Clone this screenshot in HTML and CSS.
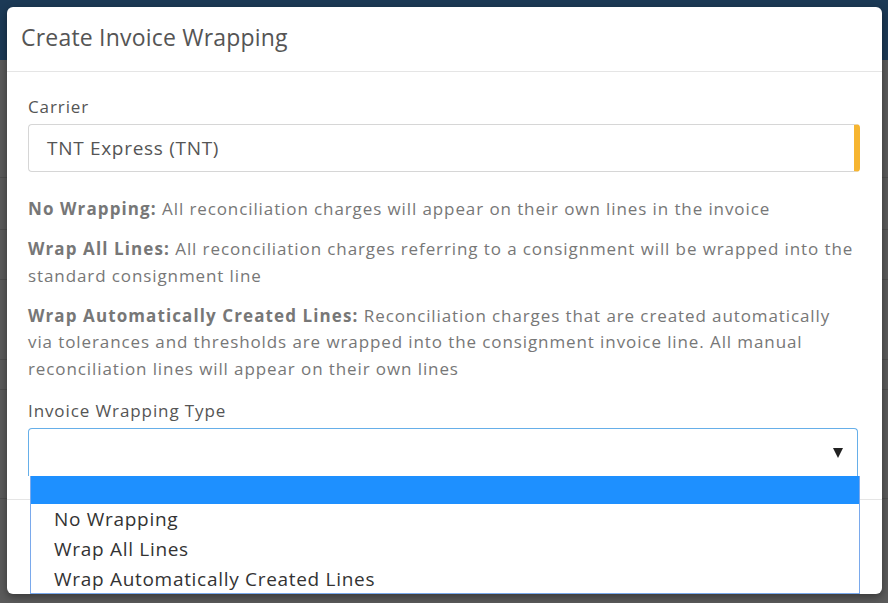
FILE: index.html
```html
<!DOCTYPE html>
<html>
<head>
<meta charset="utf-8">
<link rel="stylesheet" href="styles.css">
</head>
<body>
<div class="page">
  <div class="topbar"></div>
  <div class="rows">
    <div class="row r1"></div>
    <div class="row r2"></div>
    <div class="row r3"></div>
    <div class="row r4"></div>
    <div class="row r5"></div>
    <div class="row r6"></div>
  </div>
</div>
<div class="modal">
  <div class="modal-header">
    <h4 class="modal-title">Create Invoice Wrapping</h4>
  </div>
  <div class="modal-body">
    <div class="form-group">
      <label class="label">Carrier</label>
      <div class="input input-warn">TNT Express (TNT)</div>
    </div>
    <p class="help"><b>No Wrapping:</b> All reconciliation charges will appear on their own lines in the invoice</p>
    <p class="help"><b>Wrap All Lines:</b> All reconciliation charges referring to a consignment will be wrapped into the standard consignment line</p>
    <p class="help"><b>Wrap Automatically Created Lines:</b> Reconciliation charges that are created automatically via tolerances and thresholds are wrapped into the consignment invoice line. All manual reconciliation lines will appear on their own lines</p>
    <div class="form-group form-group-last">
      <label class="label">Invoice Wrapping Type</label>
      <div class="select">
        <span class="arrow"></span>
        <ul class="options">
          <li class="opt selected"></li>
          <li class="opt">No Wrapping</li>
          <li class="opt">Wrap All Lines</li>
          <li class="opt">Wrap Automatically Created Lines</li>
        </ul>
      </div>
    </div>
  </div>
  <div class="modal-footer"></div>
</div>
</body>
</html>
```
FILE: styles.css
```css
html, body {
  margin: 0;
  padding: 0;
  width: 888px;
  height: 603px;
  overflow: hidden;
  font-family: "Open Sans", "Noto Sans", sans-serif;
}
body {
  background: #5b5b5b;
}
.page {
  width: 888px;
  height: 603px;
}
.topbar {
  height: 60px;
  background: #1c3a56;
}
.rows {
  display: flex;
  flex-direction: column;
}
.row {
  border-bottom: 1px solid #4f4f4f;
}
.r1 { height: 117px; }
.r2 { height: 51px; }
.r3 { height: 49px; }
.r4 { height: 79px; }
.r5 { height: 29px; }
.r6 { height: 108px; }

.modal {
  position: absolute;
  left: 7px;
  top: 7px;
  width: 875px;
  height: 587px;
  background: #fff;
  border-radius: 6px;
  box-shadow: 0 3px 9px rgba(0,0,0,0.4);
  display: flex;
  flex-direction: column;
}
.modal-header {
  border-bottom: 1px solid #e5e5e5;
  padding: 0 14px 4px 14px;
  box-sizing: border-box;
  height: 65px;
  display: flex;
  align-items: center;
}
.modal-title {
  margin: 0;
  font-size: 23px;
  letter-spacing: 0.2px;
  font-weight: 400;
  color: #555;
  line-height: 30px;
}
.modal-body {
  height: 428px;
  padding: 23px 22px 0 21px;
  box-sizing: border-box;
  border-bottom: 1px solid #e5e5e5;
}
.form-group {
  display: flex;
  flex-direction: column;
}
.label {
  font-size: 17px;
  letter-spacing: 0.9px;
  line-height: 24px;
  color: #555;
  margin-bottom: 5px;
}
.input {
  height: 48px;
  box-sizing: border-box;
  border: 1px solid #d6d6d6;
  border-radius: 4px;
  padding-left: 18px;
  font-size: 19px;
  letter-spacing: 0.7px;
  color: #555;
  display: flex;
  align-items: center;
}
.input-warn {
  border-right: 6px solid #f6b531;
}
.help {
  margin: 0 2px 13.5px 0;
  font-size: 17px;
  letter-spacing: 0.9px;
  line-height: 26.5px;
  color: #777;
}
.form-group + .help {
  margin-top: 24px;
}
.help b {
  font-weight: 700;
  letter-spacing: 1.1px;
}
.form-group-last {
  margin-top: 17px;
}
.select {
  position: relative;
  height: 48px;
  box-sizing: border-box;
  border: 1px solid #66afe9;
  border-bottom: none;
  border-radius: 4px 4px 0 0;
  margin-right: 2px;
}
.arrow {
  position: absolute;
  right: 14px;
  top: 19px;
  width: 0;
  height: 0;
  border-left: 5px solid transparent;
  border-right: 5px solid transparent;
  border-top: 10px solid #222;
}
.options {
  position: absolute;
  left: 1px;
  top: 47px;
  width: 830px;
  margin: 0;
  padding: 0;
  list-style: none;
  background: #fff;
  border: 1px solid #7aa9ec;
  border-top: none;
  box-sizing: border-box;
  height: 118px;
}
.opt {
  height: 30px;
  line-height: 30px;
  padding-left: 23px;
  font-size: 19px;
  letter-spacing: 0.7px;
  color: #333;
}
.opt.selected {
  height: 28px;
  background: #1e90ff;
}
.modal-footer {
  flex: 1;
}
```
